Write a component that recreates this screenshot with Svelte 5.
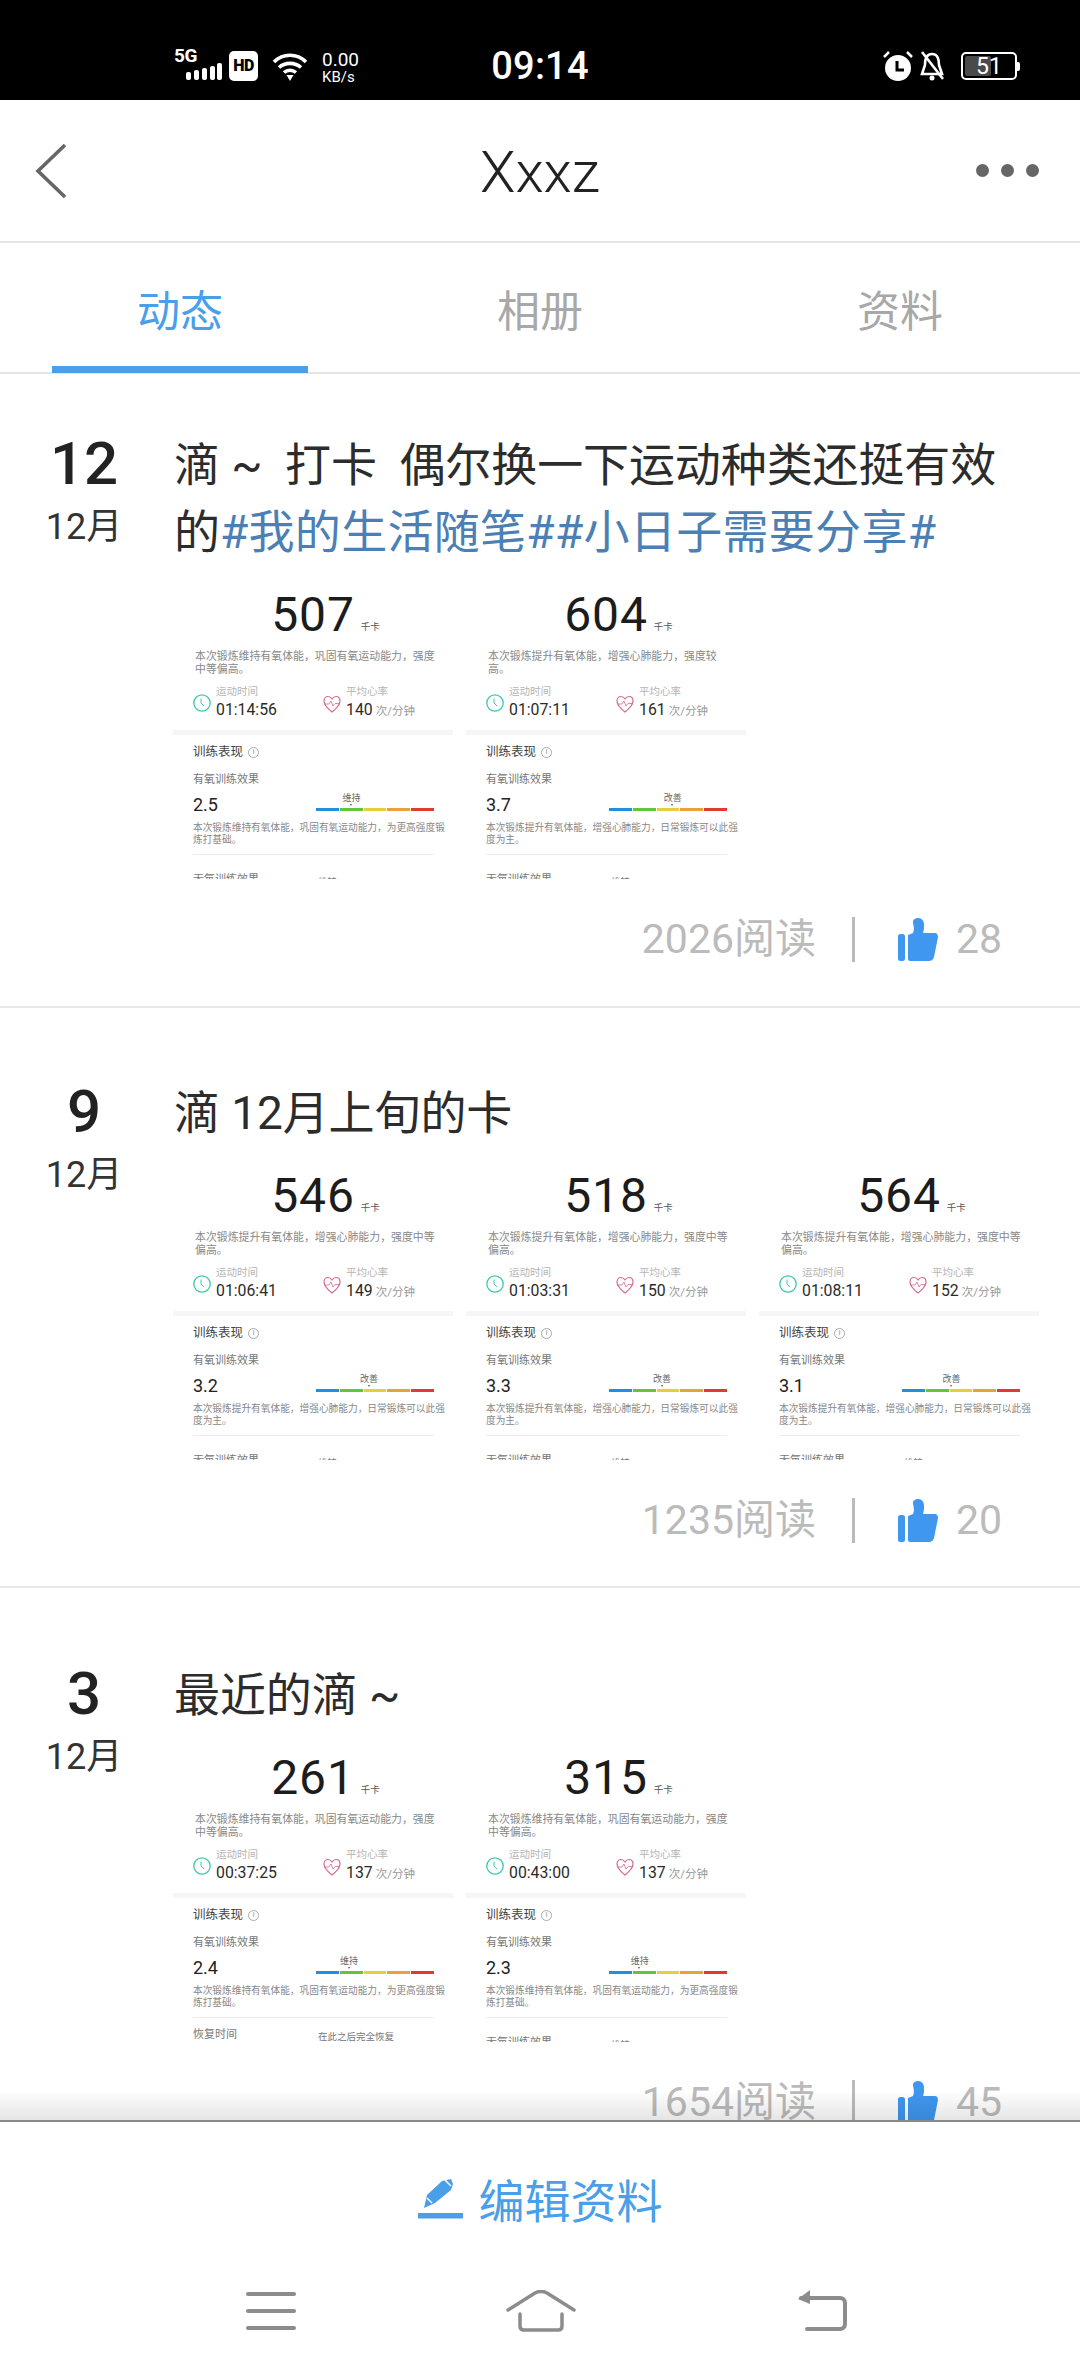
<script>
  const d1 = '本次锻炼维持有氧体能，巩固有氧运动能力，强度\n中等偏高。';
  const d2 = '本次锻炼提升有氧体能，增强心肺能力，强度较\n高。';
  const d3 = '本次锻炼提升有氧体能，增强心肺能力，强度中等\n偏高。';
  const e1 = '本次锻炼维持有氧体能，巩固有氧运动能力，为更高强度锻\n炼打基础。';
  const e2 = '本次锻炼提升有氧体能，增强心肺能力，日常锻炼可以此强\n度为主。';
  const posts = [
    { day: '12', title: '滴 ~  打卡  偶尔换一下运动种类还挺有效', br: '的', tags: '#我的生活随笔##小日子需要分享#', reads: '2026', likes: '28', tiles: [
      { kcal: '507', desc: d1, time: '01:14:56', hr: '140', score: '2.5', tag: '维持', pos: 30, effect: e1, next: '无氧训练效果', val: '维持' },
      { kcal: '604', desc: d2, time: '01:07:11', hr: '161', score: '3.7', tag: '改善', pos: 54, effect: e2, next: '无氧训练效果', val: '维持' } ] },
    { day: '9', title: '滴 12月上旬的卡', reads: '1235', likes: '20', tiles: [
      { kcal: '546', desc: d3, time: '01:06:41', hr: '149', score: '3.2', tag: '改善', pos: 45, effect: e2, next: '无氧训练效果', val: '维持' },
      { kcal: '518', desc: d3, time: '01:03:31', hr: '150', score: '3.3', tag: '改善', pos: 45, effect: e2, next: '无氧训练效果', val: '维持' },
      { kcal: '564', desc: d3, time: '01:08:11', hr: '152', score: '3.1', tag: '改善', pos: 42, effect: e2, next: '无氧训练效果', val: '维持' } ] },
    { day: '3', title: '最近的滴 ~', reads: '1654', likes: '45', tiles: [
      { kcal: '261', desc: d1, time: '00:37:25', hr: '137', score: '2.4', tag: '维持', pos: 28, effect: e1, next: '恢复时间', val: '在此之后完全恢复', rec: true },
      { kcal: '315', desc: d1, time: '00:43:00', hr: '137', score: '2.3', tag: '维持', pos: 26, effect: e1, next: '无氧训练效果', val: '维持' } ] }
  ];
</script>

<div class="page">
  <header class="status">
    <div class="st-left">
      <div class="net">
        <span class="fiveg">5G</span>
        <svg class="signal" viewBox="0 0 36 17" width="36" height="17"><g fill="#fff"><rect x="0" y="9" width="5" height="8" rx="2"/><rect x="8" y="7" width="5" height="10" rx="2"/><rect x="16" y="5" width="5" height="12" rx="2"/><rect x="24" y="3" width="5" height="14" rx="2"/><rect x="31" y="0" width="5" height="17" rx="2"/></g></svg>
      </div>
      <span class="hd">HD</span>
      <svg class="wifi" viewBox="0 0 36 28" width="36" height="28"><g fill="none" stroke="#fff" stroke-width="3.6"><path d="M2 9 C11 0 25 0 34 9"/><path d="M7 14.500 C13 9 23 9 29 14.500"/><path d="M12 19.500 C15.500 16.500 20.500 16.500 24 19.500"/></g><path d="M14.500 22 L21.500 22 L18 28 Z" fill="#fff"/></svg>
      <div class="speed"><span class="sp1">0.00</span><span class="sp2">KB/s</span></div>
    </div>
    <div class="time">09:14</div>
    <div class="st-right">
      <svg viewBox="0 0 30 30" width="30" height="30"><circle cx="15" cy="17" r="13" fill="#fff"/><path d="M14 10 V19 H21" fill="none" stroke="#000" stroke-width="3"/><path d="M1 6 L6 1 M24 1 L29 6" stroke="#fff" stroke-width="2.500"/></svg>
      <svg viewBox="0 0 26 30" width="26" height="30"><path d="M13 3 C7 3 6 9 6 14 L3 23 H23 L20 14 C20 9 19 3 13 3 Z" fill="none" stroke="#fff" stroke-width="2.600"/><path d="M3 1 L24 28" stroke="#fff" stroke-width="2.600"/><circle cx="13" cy="27" r="2.500" fill="#fff"/></svg>
      <div class="battery"><span class="bfill"></span><span class="bnum">51</span><i class="bcap"></i></div>
    </div>
  </header>

  <nav class="topbar">
    <svg class="back" viewBox="0 0 32 56" width="32" height="56"><path d="M30 2 L3 28 L30 54" fill="none" stroke="#666" stroke-width="3.600"/></svg>
    <h1>Xxxz</h1>
    <div class="dots"><i></i><i></i><i></i></div>
  </nav>

  <div class="tabs">
    <div class="tab on">动态<span class="ink"></span></div>
    <div class="tab">相册</div>
    <div class="tab">资料</div>
  </div>

  <main class="feed">
    {#each posts as p}
      <article class="post">
        <div class="date"><div class="day">{p.day}</div><div class="mon">12月</div></div>
        <div class="body">
          <p class="title">{p.title}{#if p.br}<br />{p.br}<span class="tag">{p.tags}</span>{/if}</p>
          <div class="tiles">
            {#each p.tiles as t}
              <div class="tile">
                <div class="hero"><span class="kcal">{t.kcal}</span><span class="unit">千卡</span></div>
                <div class="desc">{t.desc}</div>
                <div class="stats">
                  <div class="stat">
                    <svg viewBox="0 0 18 20" width="18" height="20"><circle cx="9" cy="10" r="8.200" fill="none" stroke="#3fc9ae" stroke-width="1.300"/><path d="M8 5.500 V10 L11 13" fill="none" stroke="#3fc9ae" stroke-width="1"/></svg>
                    <div><div class="lab">运动时间</div><div class="val">{t.time}</div></div>
                  </div>
                  <div class="stat">
                    <svg viewBox="0 0 18 20" width="18" height="20"><path d="M9 18 C4 14 1 11 1 7 C1 4 3 2.500 5 2.500 C7 2.500 8 3.500 9 5 C10 3.500 11 2.500 13 2.500 C15 2.500 17 4 17 7 C17 11 14 14 9 18 Z" fill="none" stroke="#d6698f" stroke-width="1.200"/><path d="M2 10 H6 L8 7 L10 12 L12 9.500 H16" fill="none" stroke="#d6698f" stroke-width=".8"/></svg>
                    <div><div class="lab">平均心率</div><div class="val">{t.hr}<small>次/分钟</small></div></div>
                  </div>
                </div>
                <div class="band"></div>
                <div class="sec">
                  <div class="sec-h">训练表现<span class="info">i</span></div>
                  <div class="sub">有氧训练效果</div>
                  <div class="scorerow">
                    <span class="score">{t.score}</span>
                    <div class="meter">
                      <span class="mtag" style="left:{t.pos}%">{t.tag}</span>
                      <div class="bar"><i class="c1"></i><i class="c2"></i><i class="c3"></i><i class="c4"></i><i class="c5"></i></div>
                    </div>
                  </div>
                  <div class="effect">{t.effect}</div>
                  <div class="rule"></div>
                  <div class="next" class:rec={t.rec}><span class="n1">{t.next}</span><span class="n2">{t.val}</span></div>
                </div>
              </div>
            {/each}
          </div>
          <div class="foot">
            <span class="reads">{p.reads}阅读</span>
            <i class="sep"></i>
            <svg class="thumb" viewBox="0 0 40 43" width="40" height="43"><rect x="0" y="16" width="7" height="27" rx="2.500" fill="#3f97f0"/><path d="M10 17 L15 15 C17 11 15 6 15 4 C15 1 18 0 20 0 C24 0 26 3 26 7 C26 10 26 12 25 15 L37 15 C39 15 40 17 40 19 L36 39 C35 42 33 43 31 43 L12 43 C11 43 10 42 10 41 Z" fill="#3f97f0"/></svg>
            <span class="likes">{p.likes}</span>
          </div>
        </div>
      </article>
    {/each}
    <div class="fade"></div>
  </main>

  <footer class="bottom">
    <div class="edit">
      <svg viewBox="0 0 45 40" width="45" height="40"><path d="M6 29 L9 16 L24 2 L33 0 L35 5 L33 11 L17 24 Z" fill="#4a9fe8"/><path d="M9 19 L14 24" stroke="#fff" stroke-width="1.500"/><path d="M27 1 L33 7" stroke="#fff" stroke-width="1.500"/><rect x="0" y="34" width="45" height="5.500" fill="#4a9fe8"/></svg>
      <span>编辑资料</span>
    </div>
    <div class="softkeys">
      <svg viewBox="0 0 50 38" width="50" height="38"><g fill="#8c8c8c"><rect x="0" y="0" width="50" height="4" rx="2"/><rect x="0" y="17" width="50" height="4" rx="2"/><rect x="0" y="34" width="50" height="4" rx="2"/></g></svg>
      <svg viewBox="0 0 70 42" width="70" height="42"><g fill="none" stroke="#8c8c8c" stroke-width="3.500" stroke-linecap="round" stroke-linejoin="round"><path d="M2 20 L29 3 Q35 0 41 3 L68 20"/><path d="M14 24 V36 C14 39 16 40 18 40 H52 C54 40 56 39 56 36 V24"/></g></svg>
      <svg class="key-back" viewBox="0 0 50 42" width="50" height="42"><path d="M3 8 H42 C45 8 47 10 47 13 V34 C47 37 45 39 42 39 H9" fill="none" stroke="#8c8c8c" stroke-width="4" stroke-linecap="round"/><path d="M12 0 V14 L0 9 Z" fill="#8c8c8c"/></svg>
    </div>
  </footer>
</div>

<style>
  :global(body) { margin: 0; background: #fff; }
  .page {
    width: 1080px; height: 2376px; display: flex; flex-direction: column; overflow: hidden;
    font-family: Roboto, "Noto Sans CJK SC", sans-serif; background: #fff;
  }
  .status {
    height: 100px; flex: none; background: #000; color: #fff; position: relative;
    display: flex; align-items: flex-end; padding-bottom: 14px; box-sizing: border-box;
  }
  .st-left { position: absolute; left: 174px; top: 49px; display: flex; align-items: flex-start; }
  .net { width: 50px; height: 32px; position: relative; }
  .fiveg { position: absolute; left: 0; top: -1px; font-size: 19px; font-weight: 700; line-height: 16px; letter-spacing: -.5px; }
  .signal { position: absolute; left: 12px; top: 14px; }
  .hd { width: 29px; height: 30px; margin: 2px 14px 0 5px; background: #fff; color: #000; border-radius: 5px; font-size: 16px; font-weight: 900; line-height: 30px; text-align: center; letter-spacing: -.5px; }
  .wifi { margin-top: 4px; }
  .speed { margin-left: 14px; display: flex; flex-direction: column; margin-top: 2px; }
  .sp1 { font-size: 19px; line-height: 17px; }
  .sp2 { font-size: 15px; line-height: 15px; margin-top: 2px; }
  .time { width: 100%; text-align: center; font-size: 38px; line-height: 40px; font-weight: 500; letter-spacing: .2px; }
  .st-right { position: absolute; left: 883px; top: 51px; display: flex; gap: 6px; align-items: center; }
  .battery { width: 56px; height: 28px; margin-left: 10px; border: 2px solid #fff; border-radius: 5px; position: relative; box-sizing: border-box; }
  .bfill { position: absolute; left: 2px; top: 2px; bottom: 2px; width: 26px; background: #4a4a4a; border-radius: 2px; }
  .bnum { position: absolute; inset: 0; text-align: center; font-size: 23px; line-height: 25px; }
  .bcap { position: absolute; right: -5px; top: 8px; width: 3px; height: 9px; background: #fff; border-radius: 0 2px 2px 0; }

  .topbar {
    height: 143px; flex: none; box-sizing: border-box; border-bottom: 2px solid #e4e4e4;
    display: flex; align-items: center; justify-content: center; position: relative;
  }
  .back { position: absolute; left: 35px; top: 43px; }
  h1 { margin: 0; font-size: 58px; font-weight: 300; color: #222; line-height: 64px; position: relative; top: 1px; }
  .dots { position: absolute; left: 976px; top: 64px; display: flex; gap: 12px; }
  .dots i { width: 13px; height: 13px; border-radius: 50%; background: #666; }

  .tabs { height: 131px; flex: none; box-sizing: border-box; border-bottom: 2px solid #e4e4e4; display: flex; }
  .tab { width: 360px; text-align: center; font-size: 43px; line-height: 138px; color: #a8a8a8; position: relative; }
  .tab.on { color: #4a9fe8; }
  .ink { position: absolute; left: 52px; width: 256px; bottom: -1px; height: 7px; background: #4a9fe8; }

  .feed { flex: 1; min-height: 0; overflow: hidden; position: relative; }
  .post { display: flex; border-bottom: 2px solid #e8e8e8; padding-top: 72px; height: 580px; box-sizing: border-box; }
  .post:first-child { padding-top: 58px; height: 634px; }
  .post:last-of-type { padding-top: 74px; height: 600px; border-bottom: 0; }
  .date { width: 174px; flex: none; text-align: center; padding-right: 6px; box-sizing: border-box; color: #222; }
  .day { font-size: 60px; line-height: 64px; font-weight: 500; }
  .mon { font-size: 36px; line-height: 44px; margin-top: 9px; color: #333; }
  .body { flex: 1; min-width: 0; }
  .title { margin: 0; font-size: 46px; line-height: 67px; color: #2c2c2c; white-space: pre; letter-spacing: -.1px; }
  .tag { color: #4c7fb3; letter-spacing: .3px; }
  .tiles { display: flex; gap: 13px; margin-top: 9px; margin-left: -1px; }

  .tile { width: 280px; height: 304px; overflow: hidden; flex: none; color: #222; }
  .hero { height: 66px; padding-top: 7px; padding-bottom: 3px; display: flex; justify-content: center; align-items: center; }
  .kcal { font-size: 48px; line-height: 66px; color: #1c1c1c; letter-spacing: .8px; }
  .unit { font-size: 9.500px; color: #555; width: 20px; flex: none; white-space: nowrap; margin-right: -26px; margin-left: 6px; align-self: flex-end; margin-bottom: 15px; }
  .desc { margin: 0 0 0 22px; font-size: 10.900px; line-height: 12.500px; color: #888; white-space: pre; height: 34px; }
  .stats { display: flex; padding-left: 20px; height: 45px; align-items: flex-start; }
  .stat { display: flex; gap: 5px; align-items: center; width: 130px; }
  .lab { font-size: 10.500px; line-height: 14px; color: #b5b5b5; }
  .val { font-size: 15.800px; line-height: 22px; color: #2a2a2a; }
  .val small { font-size: 11.500px; color: #999; margin-left: 3px; }
  .band { height: 5px; background: #f6f6f6; }
  .sec { padding: 9px 19px 0 20px; }
  .sec-h { font-size: 12.500px; line-height: 16px; color: #444; display: flex; align-items: center; gap: 5px; }
  .info { width: 9px; height: 9px; border: 1px solid #aaa; border-radius: 50%; font-size: 7px; line-height: 9px; text-align: center; color: #888; }
  .sub { font-size: 11px; line-height: 14px; margin-top: 13px; color: #777; }
  .scorerow { display: flex; justify-content: space-between; height: 35px; }
  .score { font-size: 18px; line-height: 36px; color: #222; }
  .meter { width: 118px; position: relative; }
  .mtag { position: absolute; top: 5px; transform: translateX(-50%); font-size: 9px; line-height: 12px; color: #666; }
  .mtag::after { content: ""; position: absolute; left: 50%; top: 12px; margin-left: -1.500px; border: 1.500px solid transparent; border-top: 2px solid #555; }
  .bar { position: absolute; left: 0; right: 0; top: 21px; height: 3px; display: flex; gap: 1px; }
  .bar i { flex: 1; }
  .c1 { background: #1f8fe0; } .c2 { background: #63c43d; } .c3 { background: #e6cf3a; } .c4 { background: #e9a13a; } .c5 { background: #e23a2e; }
  .effect { font-size: 9.700px; line-height: 11.500px; color: #888; white-space: pre; height: 23px; }
  .rule { height: 1px; background: #ececec; margin-top: 9px; }
  .next { display: flex; margin-top: 18px; font-size: 11px; line-height: 14px; color: #777; }
  .next.rec { margin-top: 10px; }
  .n1 { width: 125px; flex: none; }
  .n2 { font-size: 9.500px; line-height: 18px; white-space: nowrap; }

  .foot { display: flex; align-items: center; margin-top: 35px; height: 50px; padding-left: 468px; color: #bbb; font-size: 41px; line-height: 50px; white-space: nowrap; }
  .reads { width: 176px; flex: none; text-align: right; margin-left: -2px; }
  .sep { width: 3px; height: 45px; background: #bbb; margin-left: 36px; flex: none; }
  .thumb { margin-left: 43px; flex: none; }
  .likes { margin-left: 18px; }
  .fade { position: absolute; left: 0; right: 0; bottom: 0; height: 30px; background: linear-gradient(to bottom, rgba(0,0,0,0), rgba(0,0,0,.1)); }

  .bottom { height: 256px; flex: none; border-top: 2px solid #8a8a8a; box-sizing: border-box; background: #fff; }
  .edit { display: flex; align-items: center; justify-content: center; height: 151px; gap: 16px; color: #4a9fe8; font-size: 46px; }
  .edit svg { margin-top: 2px; }
  .softkeys { display: flex; align-items: center; height: 42px; margin-top: 17px; padding-left: 246px; gap: 210px; }
  .key-back { margin-left: 12px; }
</style>
